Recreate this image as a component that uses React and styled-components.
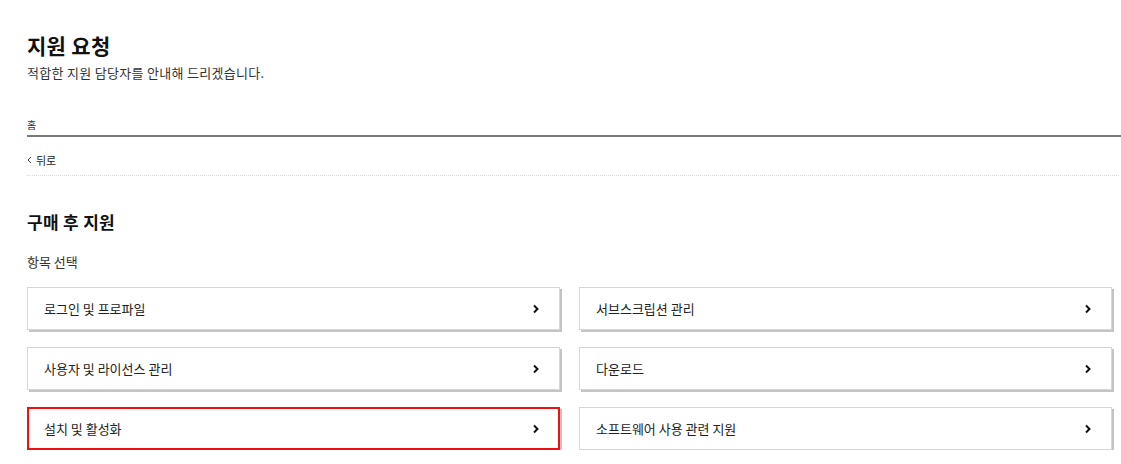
import React from 'react';
import styled, { createGlobalStyle } from 'styled-components';

const GlobalStyle = createGlobalStyle`
    body {
        margin: 0;
        background: #fff;
        font-family: "Noto Sans CJK KR", "Noto Sans", sans-serif;
        color: #222;
    }
`;

const Page = styled.div`
    padding: 0 0 0 27px;
`;

const Title = styled.h1`
    margin: 33px 0 0;
    font-size: 21px;
    line-height: 24px;
    font-weight: 700;
    letter-spacing: 0.3px;
    color: #111;
`;

const Subtitle = styled.p`
    margin: 8px 0 0;
    font-size: 13px;
    line-height: 16px;
    letter-spacing: 0.3px;
    color: #333;
`;

const Breadcrumb = styled.div`
    margin-top: 37px;
    padding-bottom: 3px;
    font-size: 10px;
    line-height: 14px;
    color: #333;
    border-bottom: 2px solid #7a7a7a;
`;

const BackLink = styled.div`
    margin-top: 16px;
    padding-bottom: 8px;
    font-size: 11px;
    line-height: 14px;
    color: #222;
    border-bottom: 1px dotted #ddd;
    margin-right: 2px;
    display: flex;
    align-items: center;
    gap: 4px;
`;

const SectionTitle = styled.h2`
    margin: 36px 0 0;
    font-size: 17px;
    line-height: 20px;
    font-weight: 700;
    letter-spacing: 0.3px;
    color: #111;
`;

const Label = styled.div`
    margin-top: 22px;
    font-size: 13px;
    line-height: 16px;
    color: #333;
`;

const Grid = styled.div`
    margin-top: 17px;
    display: grid;
    grid-template-columns: 533px 533px;
    column-gap: 19px;
    row-gap: 17px;
`;

const Card = styled.div`
    box-sizing: border-box;
    height: 43px;
    display: flex;
    align-items: center;
    justify-content: space-between;
    padding: 0 19px 0 16px;
    border: 1px solid #d6d6d6;
    box-shadow: 2px 2px 0 #c4c4c4;
    background: #fff;
    font-size: 13px;
    color: #222;
    outline: ${p => (p.$highlight ? '2px solid #f01010' : 'none')};
    outline-offset: -2px;
`;

const Chevron = () => (
    <svg width="8" height="10" viewBox="0 0 8 10" aria-hidden="true">
        <polyline points="2,1.5 5.5,5 2,8.5" fill="none" stroke="#111" strokeWidth="2" />
    </svg>
);

const SmallChevron = () => (
    <svg width="5" height="8" viewBox="0 0 5 8" aria-hidden="true">
        <polyline points="4,1 1,4 4,7" fill="none" stroke="#444" strokeWidth="1" />
    </svg>
);

const items = [
    '로그인 및 프로파일',
    '서브스크립션 관리',
    '사용자 및 라이선스 관리',
    '다운로드',
    '설치 및 활성화',
    '소프트웨어 사용 관련 지원',
];

const App = () => (
    <Page>
        <GlobalStyle />
        <Title>지원 요청</Title>
        <Subtitle>적합한 지원 담당자를 안내해 드리겠습니다.</Subtitle>
        <Breadcrumb>홈</Breadcrumb>
        <BackLink>
            <SmallChevron />
            뒤로
        </BackLink>
        <SectionTitle>구매 후 지원</SectionTitle>
        <Label>항목 선택</Label>
        <Grid>
            {items.map(item => (
                <Card key={item} $highlight={item === '설치 및 활성화'}>
                    <span>{item}</span>
                    <Chevron />
                </Card>
            ))}
        </Grid>
    </Page>
);

export default App;
